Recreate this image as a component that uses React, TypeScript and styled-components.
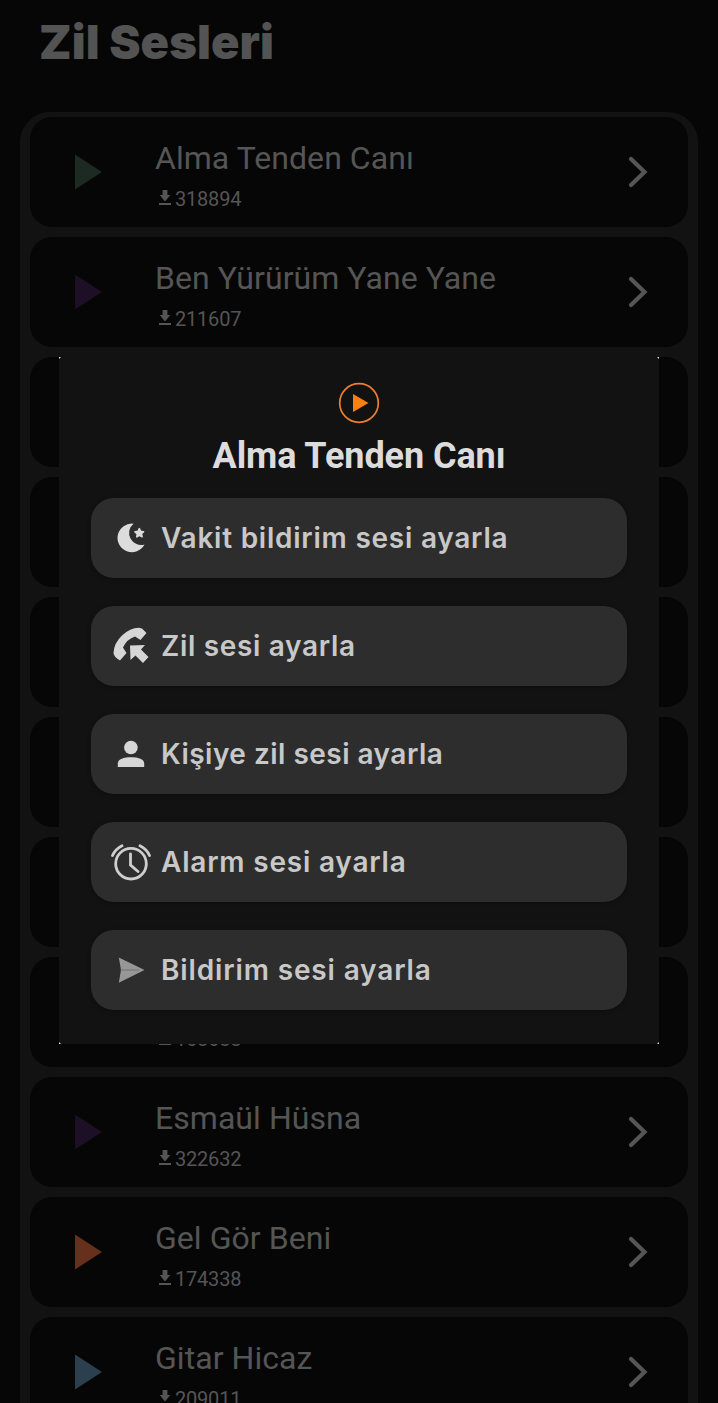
import React from "react";
import styled, { createGlobalStyle } from "styled-components";

const GlobalStyle = createGlobalStyle`
  * { box-sizing: border-box; }
  html, body { margin: 0; padding: 0; background: #060606; overflow: hidden; }
  body { font-family: Roboto, "Liberation Sans", sans-serif; }
`;

const Screen = styled.main`
  height: 1403px;
  overflow: hidden;
  background: #060606;
  color: #555;
`;

const Heading = styled.h1`
  margin: 0;
  height: 112px;
  padding: 14px 0 0 39px;
  font-family: Inter, Roboto, sans-serif;
  font-size: 47px;
  line-height: 56px;
  font-weight: 900;
  letter-spacing: 0.1px;
  color: #535353;
`;

const Panel = styled.section`
  margin: 0 20px;
  padding: 5px 10px;
  display: flex;
  flex-direction: column;
  gap: 10px;
  border-radius: 30px 30px 0 0;
  background: #121212;
`;

const Row = styled.article`
  flex: none;
  height: 110px;
  padding: 0 38px 0 44px;
  display: flex;
  align-items: center;
  border-radius: 22px;
  background: #060606;
`;

const PlayMark = styled.svg<{ $color: string }>`
  width: 28px;
  height: 36px;
  margin-right: 53px;
  fill: ${(p) => p.$color};
`;

const RowText = styled.div`
  flex: 1;
  height: 110px;
  padding-top: 21px;
`;

const Name = styled.div`
  height: 40px;
  font-size: 32px;
  line-height: 40px;
  letter-spacing: 0.05px;
  white-space: nowrap;
`;

const Downloads = styled.div`
  display: flex;
  align-items: center;
  gap: 4px;
  height: 42px;
  padding-left: 4px;
  font-size: 20px;
  line-height: 42px;
  letter-spacing: -0.2px;
`;

const DownloadMark = styled.svg`
  width: 12px;
  height: 16px;
  margin-top: -2px;
  fill: #555;
`;

const Chevron = styled.svg`
  width: 24px;
  height: 34px;
  fill: none;
  stroke: #555;
  stroke-width: 4.2;
  stroke-linecap: round;
`;

const Overlay = styled.div`
  position: fixed;
  top: 357px;
  left: 59px;
`;

const Dialog = styled.div`
  width: 600px;
  height: 687px;
  padding: 25px 32px 0;
  display: flex;
  flex-direction: column;
  align-items: center;
  background: #121212;
`;

const DialogPlay = styled.svg`
  width: 42px;
  height: 42px;
`;

const DialogTitle = styled.h2`
  margin: 10px 0 20px;
  font-size: 36px;
  line-height: 44px;
  font-weight: 700;
  letter-spacing: -0.08px;
  color: #dcdcdc;
  white-space: nowrap;
`;

const Actions = styled.div`
  width: 100%;
  display: flex;
  flex-direction: column;
  gap: 28px;
`;

const Action = styled.button<{ $spacing: number }>`
  width: 536px;
  height: 80px;
  padding: 0 0 0 15px;
  display: flex;
  align-items: center;
  gap: 5px;
  border: 0;
  border-radius: 23px;
  background: #2d2d2d;
  box-shadow: 0 1px 4px rgba(0, 0, 0, 0.3);
  color: #c8c8c8;
  font: 600 28px Inter, Roboto, sans-serif;
  letter-spacing: ${(p) => p.$spacing}px;
  text-align: left;
`;

const ActionIcon = styled.svg`
  width: 50px;
  height: 50px;
  flex: none;
`;

const Corner = styled.i<{ $right?: boolean; $bottom?: boolean }>`
  position: absolute;
  ${(p) => (p.$right ? "right: 0;" : "left: 0;")}
  ${(p) => (p.$bottom ? "bottom: 0;" : "top: 0;")}
  width: 2px;
  height: 2px;
  background: #ddd;
  clip-path: ${(p) =>
    p.$bottom
      ? p.$right
        ? "polygon(100% 0, 100% 100%, 0 100%)"
        : "polygon(0 0, 100% 100%, 0 100%)"
      : p.$right
        ? "polygon(0 0, 100% 0, 100% 100%)"
        : "polygon(0 0, 100% 0, 0 100%)"};
`;

type Tone = { name?: string; count?: string; color?: string };

const tones: Tone[] = [
  { name: "Alma Tenden Canı", count: "318894", color: "#1c2a22" },
  { name: "Ben Yürürüm Yane Yane", count: "211607", color: "#1d0f26" },
  {},
  {},
  {},
  {},
  {},
  { count: "168688" },
  { name: "Esmaül Hüsna", count: "322632", color: "#1d0f26" },
  { name: "Gel Gör Beni", count: "174338", color: "#66301d" },
  { name: "Gitar Hicaz", count: "209011", color: "#2b3f4e" },
];

const ToneRow = ({ name, count, color }: Tone) => (
  <Row>
    <PlayMark $color={color ?? "transparent"} viewBox="0 0 28 36">
      <path d="M1 .5 28 18 1 35.5Z" />
    </PlayMark>
    <RowText>
      <Name>{name}</Name>
      {count && (
        <Downloads>
          <DownloadMark viewBox="0 0 12 16">
            <path d="M3.6 0h4.8v5h2.900L6 11.500.7 5h2.900ZM0 13h12v2H0Z" />
          </DownloadMark>
          {count}
        </Downloads>
      )}
    </RowText>
    {name && (
      <Chevron viewBox="0 0 24 34">
        <path d="M5 4 18.500 17 5 30" />
      </Chevron>
    )}
  </Row>
);

const MoonIcon = () => (
  <ActionIcon viewBox="0 0 50 50" fill="#dcdcdc">
    <path d="M27.500 10.700A14.300 14.300 0 1 0 38.500 31.500 12 12 0 0 1 27.500 10.700Z" />
    <path
      d="m33.300 15.700 1.300 2.700 3 .3-2.200 2 .7 3-2.700-1.400-2.600 1.600.5-3.100-2.300-2 3-.5Z"
      stroke="#dcdcdc"
      strokeWidth="1.600"
      strokeLinejoin="round"
    />
  </ActionIcon>
);

const CallIcon = () => (
  <ActionIcon viewBox="0 0 50 50" fill="#d6d6d6">
    <path d="M7.500 32Q8 22 16 14.500 24 7 33 6.800L36 7.500 40.500 12 34.500 19 29 15.500Q21 18 17 26.500L20.500 32 14 39.500Q8 36 7.500 32Z" />
    <path d="M24 24.500 39 24 35 28.500 42.500 36 37 42 29.500 34.500 24.500 39Z" />
  </ActionIcon>
);

const PersonIcon = () => (
  <ActionIcon viewBox="0 0 50 50" fill="#d6d6d6">
    <circle cx="24.900" cy="18.500" r="6.800" />
    <path d="M11.800 38V34.500C11.800 30 18 28.300 25 28.300S38.200 30 38.200 34.500V38Z" />
  </ActionIcon>
);

const AlarmIcon = () => (
  <ActionIcon viewBox="0 0 50 50" fill="none" stroke="#cecece" strokeWidth="2.800" strokeLinecap="round">
    <circle cx="25" cy="26.700" r="15.300" />
    <path d="M24.500 17V28L32 34.500M6.500 18.500Q9.500 12 16 8.800M34 8.800Q40.500 12 43.500 18.500" />
  </ActionIcon>
);

const SendIcon = () => (
  <ActionIcon viewBox="0 0 50 50" fill="#979797">
    <path d="M12.800 12.500 38.500 25 12.800 37.800 15 25Z" />
    <path d="M14.500 25H33" stroke="#707070" strokeWidth="1" />
  </ActionIcon>
);

const actions = [
  { label: "Vakit bildirim sesi ayarla", icon: <MoonIcon />, spacing: 0.76 },
  { label: "Zil sesi ayarla", icon: <CallIcon />, spacing: 0.68 },
  { label: "Kişiye zil sesi ayarla", icon: <PersonIcon />, spacing: 0.48 },
  { label: "Alarm sesi ayarla", icon: <AlarmIcon />, spacing: 0.8 },
  { label: "Bildirim sesi ayarla", icon: <SendIcon />, spacing: 0.86 },
];

export default function App() {
  return (
    <>
      <GlobalStyle />
      <Screen>
        <Heading>Zil Sesleri</Heading>
        <Panel>
          {tones.map((tone, i) => (
            <ToneRow key={i} {...tone} />
          ))}
        </Panel>
      </Screen>
      <Overlay>
        <Dialog role="dialog">
          <DialogPlay viewBox="0 0 42 42">
            <circle cx="21" cy="21" r="19.300" fill="none" stroke="#ed7f30" strokeWidth="1.700" />
            <path d="M15 12 30.500 21 15 30Z" fill="#ff7f0e" />
          </DialogPlay>
          <DialogTitle>Alma Tenden Canı</DialogTitle>
          <Actions>
            {actions.map((a) => (
              <Action key={a.label} $spacing={a.spacing}>
                {a.icon}
                {a.label}
              </Action>
            ))}
          </Actions>
        </Dialog>
        <Corner />
        <Corner $right />
        <Corner $bottom />
        <Corner $right $bottom />
      </Overlay>
    </>
  );
}
